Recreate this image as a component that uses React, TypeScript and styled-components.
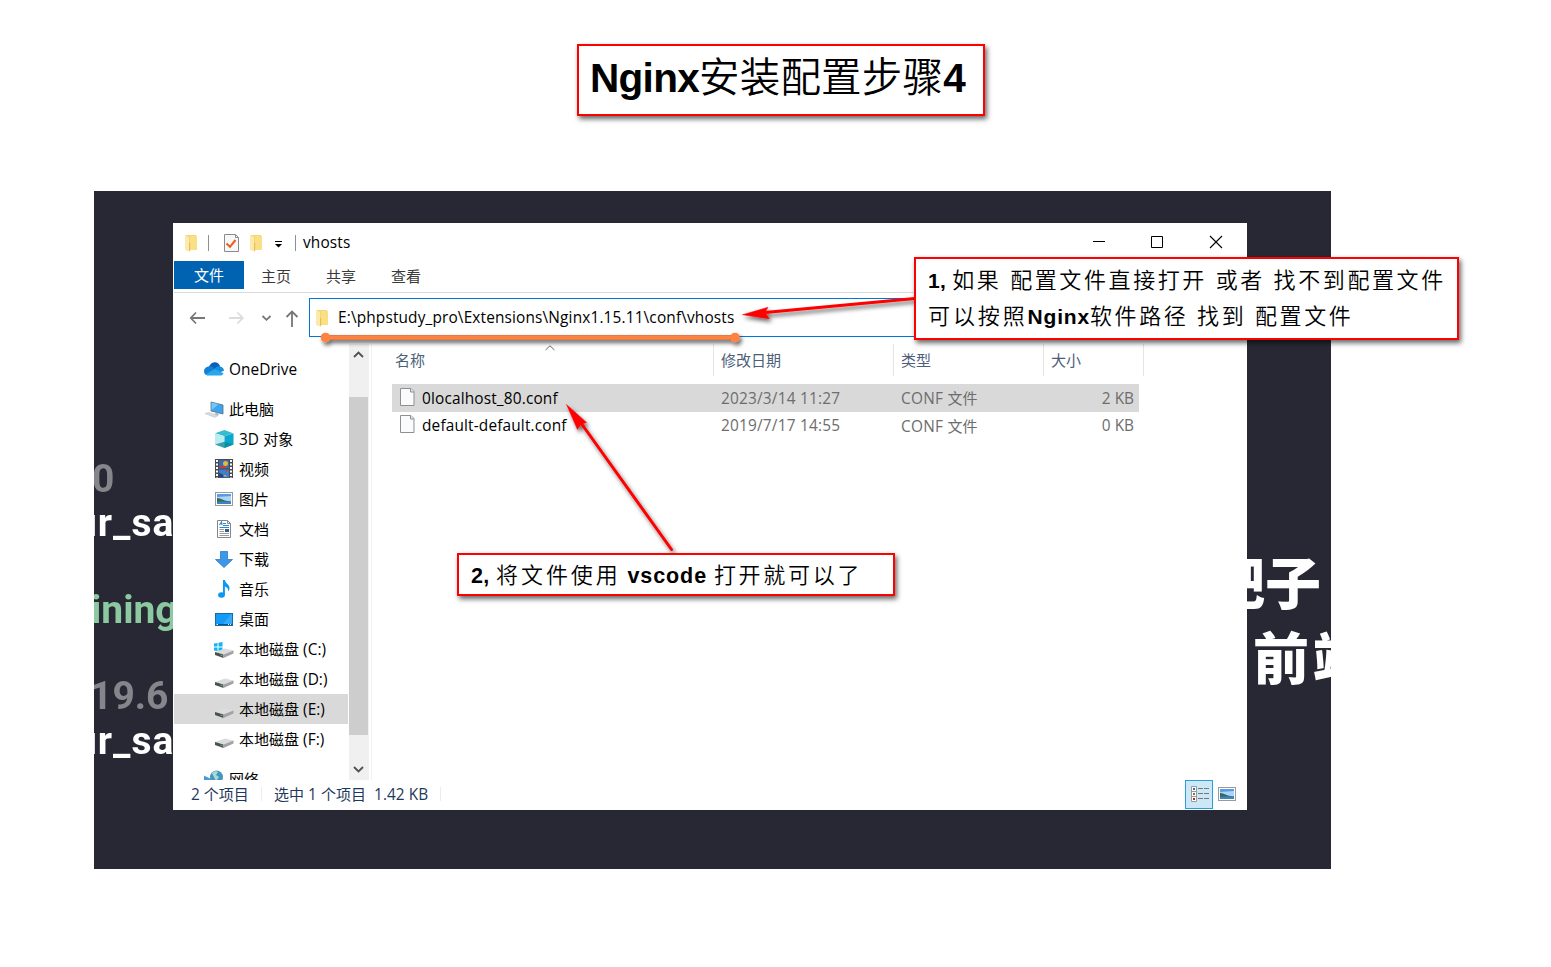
import React from 'react';
import styled, { createGlobalStyle } from 'styled-components';

const UI_FONT = '"Open Sans", "Noto Sans CJK SC", sans-serif';
const NOTE_FONT = '"Liberation Sans", "Noto Sans CJK SC", sans-serif';

const GlobalStyle = createGlobalStyle`
  *, *::before, *::after { box-sizing: border-box; }
  html, body { margin: 0; padding: 0; background: #fff; }
  body { width: 1551px; height: 967px; overflow: hidden; }
  svg { display: block; flex: none; }
`;

/* ---------- page ---------- */

const Page = styled.main`
  position: relative;
  width: 1551px;
  height: 967px;
  background: #fff;
  font-family: ${UI_FONT};
`;

const Header = styled.header`
  display: flex;
  height: 191px;
  padding: 44px 0 0 577px;
`;

const Backdrop = styled.section`
  display: flex;
  width: 1237px;
  height: 678px;
  margin-left: 94px;
  background: #272834;
  overflow: hidden;
`;

const LeftStrip = styled.div`
  flex: none;
  width: 79px;
  padding-top: 266px;
  overflow: hidden;
  font-family: Roboto, sans-serif;
  font-weight: 700;
  font-size: 39px;
  line-height: 44px;
`;

const CodeText = styled.div<{ $color: string; $shift: number; $gap?: number; $spacing?: number }>`
  margin: ${(p) => p.$gap ?? 0}px 0 0 ${(p) => p.$shift}px;
  color: ${(p) => p.$color};
  letter-spacing: ${(p) => p.$spacing ?? 0}px;
  white-space: nowrap;
  filter: blur(0.6px);
`;

const RightStrip = styled.div`
  flex: none;
  width: 84px;
  padding-top: 351px;
  overflow: hidden;
  color: #fff;
  font-family: "Noto Sans CJK SC", sans-serif;
  font-weight: 900;
  font-size: 56px;
  line-height: 75px;
`;

const BigText = styled.div<{ $shift: number; $spacing?: number }>`
  margin-left: ${(p) => p.$shift}px;
  letter-spacing: ${(p) => p.$spacing ?? 0}px;
  white-space: nowrap;
  filter: blur(0.5px);
`;

/* ---------- explorer window ---------- */

const Window = styled.div`
  flex: none;
  display: flex;
  flex-direction: column;
  width: 1074px;
  height: 587px;
  margin-top: 32px;
  background: #fff;
  color: #000;
  font-size: 15px;
`;

const TitleBar = styled.div`
  display: flex;
  align-items: center;
  height: 38px;
  padding: 1px 24px 0 12px;
`;

const Divider = styled.i<{ $left: number; $right: number }>`
  width: 1px;
  height: 16px;
  margin: 0 ${(p) => p.$right}px 0 ${(p) => p.$left}px;
  background: #8f8f8f;
`;

const QuickIcon = styled.span<{ $right?: number; $top?: number }>`
  margin: ${(p) => p.$top ?? 0}px ${(p) => p.$right ?? 0}px 0 0;
`;

const WindowButtons = styled.div`
  display: flex;
  align-items: center;
  gap: 45px;
  margin: 0 0 2px auto;
`;

const Ribbon = styled.div`
  display: flex;
  height: 32px;
  margin-left: 1px;
  border-bottom: 1px solid #dadbdc;
`;

const RibbonTab = styled.div<{ $active?: boolean }>`
  display: flex;
  align-items: center;
  justify-content: center;
  width: ${(p) => (p.$active ? 70 : 65)}px;
  height: 28px;
  padding: ${(p) => (p.$active ? '0 0 2px' : '0 1px 0 0')};
  background: ${(p) => (p.$active ? '#0063b1' : 'transparent')};
  color: ${(p) => (p.$active ? '#fff' : '#3a3a3a')};
`;

const AddressRow = styled.div`
  display: flex;
  height: 51px;
  padding: 5px 0 0 16px;
`;

const NavButtons = styled.div`
  display: flex;
  align-items: center;
  width: 120px;
  height: 41px;
`;

const AddressBox = styled.div`
  display: flex;
  align-items: center;
  gap: 9px;
  width: 760px;
  height: 39px;
  padding-left: 6px;
  border: 1px solid #0078d7;
  white-space: nowrap;
`;

const Body = styled.div`
  display: flex;
  flex: none;
  height: 436px;
`;

const Sidebar = styled.nav`
  width: 176px;
  height: 436px;
  padding: 10px 1px 0 1px;
  overflow: hidden;
`;

const NavItem = styled.div<{ $root?: boolean; $selected?: boolean; $gap?: number }>`
  display: flex;
  align-items: center;
  height: 30px;
  margin-top: ${(p) => p.$gap ?? 0}px;
  padding-left: ${(p) => (p.$root ? 30 : 41)}px;
  background: ${(p) => (p.$selected ? '#d9d9d9' : 'transparent')};
  white-space: nowrap;
`;

const NavIcon = styled.span<{ $width: number }>`
  flex: none;
  width: ${(p) => p.$width}px;
`;

const Scrollbar = styled.div`
  display: flex;
  flex-direction: column;
  align-items: flex-start;
  width: 20px;
  height: 436px;
  background: #f0f0f0;
`;

const ScrollCap = styled.div<{ $height: number }>`
  display: flex;
  align-items: center;
  justify-content: center;
  width: 19px;
  height: ${(p) => p.$height}px;
`;

const ScrollEnd = styled.div<{ $height: number }>`
  flex: none;
  height: ${(p) => p.$height}px;
`;

const ScrollThumb = styled.div`
  flex: none;
  width: 19px;
  height: 338px;
  background: #cdcdcd;
`;

const FilePane = styled.div`
  flex: 1;
  margin-left: 2px;
  border-left: 1px solid #f2f2f2;
  padding-left: 20px;
`;

const ColumnHeads = styled.div`
  display: flex;
  height: 32px;
  color: #4c607a;
`;

const ColumnHead = styled.div<{ $width: number; $pad: number }>`
  display: flex;
  justify-content: space-between;
  width: ${(p) => p.$width}px;
  padding-left: ${(p) => p.$pad}px;
  border-right: 1px solid #e5e5e5;
  line-height: 33px;
`;

const SortMark = styled.span`
  margin: 1px 158px 0 0;
`;

const FileRow = styled.div<{ $selected?: boolean }>`
  display: flex;
  align-items: center;
  width: 747px;
  height: ${(p) => (p.$selected ? 28 : 27)}px;
  padding: 0 5px 0 8px;
  background: ${(p) => (p.$selected ? '#d9d9d9' : 'transparent')};
`;

const FileList = styled.div`
  padding-top: 8px;
`;

const FileIcon = styled.span`
  margin-bottom: 3px;
`;

const Cell = styled.div<{ $width: number; $muted?: boolean; $right?: boolean }>`
  display: flex;
  align-items: center;
  gap: 7px;
  width: ${(p) => p.$width}px;
  justify-content: ${(p) => (p.$right ? 'flex-end' : 'flex-start')};
  color: ${(p) => (p.$muted ? '#6d6d6d' : '#000')};
  white-space: nowrap;
`;

const StatusBar = styled.footer`
  display: flex;
  align-items: center;
  height: 30px;
  padding: 0 11px 2px 18px;
  color: #1e395b;
  white-space: pre;
`;

const StatusItem = styled.span<{ $width: number }>`
  width: ${(p) => p.$width}px;
  height: 14px;
  line-height: 14px;
  margin-right: 12px;
  border-right: 1px solid #ececec;
`;

const ViewSwitch = styled.div`
  display: flex;
  align-items: center;
  gap: 5px;
  margin-left: auto;
`;

const DetailsButton = styled.span`
  display: flex;
  align-items: center;
  justify-content: center;
  width: 28px;
  height: 29px;
  padding: 1px 0 0 2px;
  background: #cce8f6;
  border: 1px solid #26a0da;
`;

const Latin = styled.span<{ $spacing: number }>`
  font-size: 15.4px;
  letter-spacing: ${(p) => p.$spacing}px;
`;

const LabelText = styled.span<{ $han: boolean }>`
  white-space: pre;
  padding-bottom: ${(p) => (p.$han ? 2 : 0)}px;
`;

/* Latin runs are set slightly larger than the Chinese ones beside them. */
function Label({ text, spacing = 0.15 }: { text: string; spacing?: number }) {
  const runs = text.split(/([\u4e00-\u9fff]+)/).filter(Boolean);
  return (
    <LabelText $han={/^[\u4e00-\u9fff]+$/.test(text)}>
      {runs.map((run, i) =>
        /[\u4e00-\u9fff]/.test(run) ? run : <Latin key={i} $spacing={spacing}>{run}</Latin>
      )}
    </LabelText>
  );
}

/* ---------- notes ---------- */

const NoteBox = styled.div<{ $width: number; $height: number }>`
  width: ${(p) => p.$width}px;
  height: ${(p) => p.$height}px;
  background: #fff;
  border: 2px solid #f00;
  box-shadow: 2px 3px 5px rgba(0, 0, 0, 0.6);
  color: #000;
  font-family: ${NOTE_FONT};
  white-space: pre;
`;

const TitleNote = styled(NoteBox)`
  padding-left: 11px;
  font-size: 40.5px;
  line-height: 65px;
`;

const PathNote = styled(NoteBox)`
  position: absolute;
  left: 914px;
  top: 257px;
  padding: 3px 0 0 12px;
  font-size: 22px;
  line-height: 37px;
`;

const NoteLine = styled.div`
  height: 36px;
`;

const OpenNote = styled(NoteBox)`
  position: absolute;
  left: 457px;
  top: 553px;
  padding-left: 12px;
  line-height: 42px;
`;

const Strong = styled.b<{ $size?: number; $spacing?: number }>`
  font-size: ${(p) => (p.$size ? `${p.$size}px` : 'inherit')};
  letter-spacing: ${(p) => p.$spacing ?? 0}px;
`;

const Han = styled.span<{ $size?: number; $spacing?: number }>`
  font-size: ${(p) => (p.$size ? `${p.$size}px` : 'inherit')};
  letter-spacing: ${(p) => p.$spacing ?? 0}px;
  font-weight: 350;
`;

const Overlay = styled.svg`
  position: absolute;
  left: 0;
  top: 0;
  pointer-events: none;
`;

/* ---------- icons ---------- */

const Folder = () => (
  <svg width="13" height="18" viewBox="0 0 13 18">
    <path d="M1 1h10v1.500h1V16H4L1 15z" fill="#f6d575" />
    <path d="M5 2h7v14H5z" fill="#fbdf86" />
    <path d="M0 1l4 2v14.500L0 16z" fill="#fbe9ae" />
    <path d="M4 9h1.200v7.500L4 17.500z" fill="#e9bf55" />
  </svg>
);

const CheckDoc = () => (
  <svg width="15" height="18" viewBox="0 0 15 18">
    <path d="M.5.5h11l3 3v14H.5z" fill="#f6f7f9" stroke="#8b8b8b" />
    <path d="M11.500.5v3h3" fill="none" stroke="#8b8b8b" />
    <path d="M2.500 9.500l3.500 3.300L11.500 6" fill="none" stroke="#f05a1a" strokeWidth="2" />
  </svg>
);

const Caret = () => (
  <svg width="7" height="7" viewBox="0 0 7 7">
    <path d="M0 .5h7" stroke="#000" />
    <path d="M0 3h7L3.500 6.500z" fill="#000" />
  </svg>
);

const OneDrive = () => (
  <svg width="20" height="14" viewBox="0 0 20 14">
    <path d="M5 4.500C6.500 1.500 9 0 11.500.3c2.500.3 4 2 4.700 4.200L9 9z" fill="#0a5fb8" />
    <path d="M4.500 4.500c2.500-.6 4 .3 6 2L4 13.500C1.500 13.500 0 11.500 0 9.300 0 6.800 2 4.700 4.500 4.500z" fill="#1080d8" />
    <path d="M10 7.500c2-3 4-3.400 6-3 2.500.3 4 2 4 4.300l-5 2z" fill="#1490df" />
    <path d="M4 13.600l-2.500-1L10.500 7l9 4.200c-.6 1.500-1.800 2.400-3.500 2.400z" fill="#28a8ea" />
  </svg>
);

const Computer = () => (
  <svg width="21" height="20" viewBox="0 -2 21 20">
    <path d="M7 1l12 3v9L7 10z" fill="#3aa5ee" stroke="#5b6b7b" strokeWidth=".8" />
    <path d="M7.500 1.600l7 1.700-7 6z" fill="#74c6fa" />
    <path d="M12 12l3 .8-1 2-4-1z" fill="#aab4bc" />
    <path d="M1 12.500l4-1 9 3-3 2z" fill="#d9dde1" stroke="#b4bbc2" strokeWidth=".5" />
  </svg>
);

const Cube = () => (
  <svg width="19" height="18" viewBox="0 0 19 18">
    <path d="M9.500 0L18 3.300 9.500 6.200 0 3.300z" fill="#35bccd" />
    <path d="M0 3.300l9.500 2.900V18L0 14.500z" fill="#b9edf0" />
    <path d="M18.500 3.300L9.500 6.200V18l9-3.500z" fill="#0ba5cf" />
    <path d="M0 14.500l9.500-2.800 9 2.800L9.500 18z" fill="#0a8793" opacity=".75" />
  </svg>
);

const Film = () => (
  <svg width="18" height="20" viewBox="0 0 18 20">
    <rect width="18" height="19" fill="#4a4a4a" />
    <path d="M2 1v18M16 1v18" stroke="#fff" strokeWidth="2" strokeDasharray="2 1.500" />
    <rect x="4" y="1" width="10" height="8.500" fill="#356bb8" />
    <rect x="4" y="10.500" width="10" height="8" fill="#3f7fd2" />
    <circle cx="10.500" cy="4.500" r="2.500" fill="#e6b92e" />
    <path d="M5 7h6v2H5zM10 11h3l-1.500 2z" fill="#cf3b3b" />
    <path d="M4 14l3 1 3 3.500H4z" fill="#22477f" />
    <path d="M8 17.500q2-3 4 0" fill="#e6b92e" />
  </svg>
);

const Picture = () => (
  <svg width="18" height="14" viewBox="0 0 18 14">
    <rect x=".5" y=".5" width="17" height="13" fill="#fff" stroke="#9a9a9a" />
    <rect x="2" y="2" width="14" height="10" fill="#a9d6f7" />
    <path d="M2 2h14v2L2 5z" fill="#5b9ae6" />
    <path d="M2 6c3-.5 6 3 14 3.500V11H2z" fill="#38695a" />
    <path d="M2 10c5-1 9 0 14-.5V12H2z" fill="#3f84bd" />
  </svg>
);

const TextDoc = () => (
  <svg width="18" height="18" viewBox="0 0 18 18">
    <path d="M2.500.5h10l3 3v14h-13z" fill="#fff" stroke="#868686" />
    <path d="M12.500.5v3h3" fill="none" stroke="#868686" />
    <path d="M4.500 5L6.500 2l.5 3" fill="none" stroke="#2f86c9" strokeWidth="1.200" />
    <path d="M8 3.500h3M8 5.500h6M4.500 7.500h9.500" stroke="#2f86c9" />
    <path d="M4.500 9.500H9M4.500 11.500H9M4.500 13.500h9.500M4.500 15.500h9.500" stroke="#9a9a9a" />
    <rect x="10" y="9" width="4" height="3" fill="#2c5e95" />
  </svg>
);

const Download = () => (
  <svg width="18" height="17" viewBox="0 0 18 17">
    <path d="M5.500.5h7v8h5L9 16.500.5 8.500h5z" fill="#3c97e8" stroke="#2b7bc4" strokeWidth=".8" />
  </svg>
);

const Music = () => (
  <svg width="18" height="18" viewBox="0 0 18 18">
    <ellipse cx="6.500" cy="15" rx="3.400" ry="2.700" fill="#0b98f2" />
    <path d="M8 0h2c.3 3.500 4.500 4.500 4.500 8 0 1.500-.5 2.500-1.300 3.500.3-3-1-4.300-3.300-5V15H8z" fill="#0b98f2" />
  </svg>
);

const Desktop = () => (
  <svg width="18" height="13" viewBox="0 0 18 13">
    <rect x=".5" y=".5" width="17" height="12" fill="#139af8" stroke="#0f6fae" />
    <path d="M8 11L16 1h1v10z" fill="#35a9fa" />
    <path d="M1 11.500h16" stroke="#0b4f80" />
    <path d="M1.500 11.500h1.500M13 11.500h1M15 11.500h1" stroke="#fff" />
  </svg>
);

const Drive = ({ system }: { system?: boolean }) => (
  <svg width="20" height="20" viewBox="0 -2 20 20" overflow="visible">
    {system && (
      <path
        d="M-1 2.500L2.500 2v3.500H-1zM3.500 1.800L7.500 1v4.500h-4zM-1 6.500h3.500V10L-1 9.500zM3.500 6.500h4v4.300l-4-.7z"
        fill="#12b4f0"
      />
    )}
    <path d="M0 11L10 7.500l8.500 2-10 4z" fill="#dcdcde" />
    <path d="M0 11l8.500 2.500v3.500L0 14z" fill="#4b4f4e" />
    <path d="M8.500 13.500l10-4v3l-10 4.500z" fill="#a2a3a6" />
    <path d="M5.500 14l2 .7" stroke="#58c46a" />
  </svg>
);

const Network = () => (
  <svg width="20" height="18" viewBox="0 0 20 18">
    <circle cx="12.500" cy="7" r="6.500" fill="#4597b8" />
    <path d="M8 3c2-2 5-2.500 6-1l-2 3 3 2-3 4z" fill="#a9d9df" />
    <path d="M0 6l9 4v6l-9-3z" fill="#3b9de6" stroke="#6b8ba5" strokeWidth=".6" />
  </svg>
);

const File = () => (
  <svg width="15" height="18" viewBox="0 0 15 18">
    <path d="M.5.5h10.500l3 3v14H.5z" fill="#fafbfc" stroke="#8f8f8f" />
    <path d="M10.500.5v3.500h3.500" fill="#e8e8e8" stroke="#8f8f8f" />
  </svg>
);

const Details = () => (
  <svg width="18" height="17" viewBox="0 0 18 17">
    <path d="M.5.5h5v15h-5zM.5 5.500h5M.5 10.500h5" fill="#fff" stroke="#999" />
    <path d="M2 3h2" stroke="#2b6fa5" strokeWidth="2" />
    <path d="M2 8h2" stroke="#7a7a2a" strokeWidth="2" />
    <path d="M2 13h2" stroke="#b02a2a" strokeWidth="2" />
    <path d="M7 2.500h5M13 2.500h5M7 7.500h5M13 7.500h5M7 12.500h5M13 12.500h5" stroke="#777" />
  </svg>
);

const NavArrows = () => (
  <svg width="120" height="41" viewBox="0 0 120 41" fill="none" strokeWidth="1.800">
    <path d="M16 20H2M7 14.500L1.800 20 7 25.500" stroke="#777" />
    <path d="M40 20H54M48.500 14.500l5.200 5.500-5.200 5.500" stroke="#dcdcdc" />
    <path d="M73.500 18l4 3.800 4-3.800" stroke="#777" />
    <path d="M103 29V13.500M97.500 19l5.500-5.500 5.500 5.500" stroke="#777" />
  </svg>
);

const Chevron = ({ down }: { down?: boolean }) => (
  <svg width="11" height="8" viewBox="0 0 11 8">
    <path d={down ? 'M1 2l4.500 4.500L10 2' : 'M1 7L5.500 2.500 10 7'} fill="none" stroke="#505050" strokeWidth="1.800" />
  </svg>
);

const Minimize = () => (
  <svg width="12" height="14" viewBox="0 0 12 14"><path d="M0 6.500h12" stroke="#000" /></svg>
);
const Maximize = () => (
  <svg width="14" height="14" viewBox="0 0 14 14"><path d="M1.500 1.500h11v11h-11z" stroke="#000" fill="none" /></svg>
);
const Close = () => (
  <svg width="14" height="14" viewBox="0 0 14 14"><path d="M1 1l12 12M13 1L1 13" stroke="#000" strokeWidth="1.100" /></svg>
);

/* ---------- data ---------- */

const places = [
  { text: 'OneDrive', icon: <OneDrive />, root: true },
  { text: '此电脑', icon: <Computer />, root: true, gap: 10 },
  { text: '3D 对象', icon: <Cube /> },
  { text: '视频', icon: <Film /> },
  { text: '图片', icon: <Picture /> },
  { text: '文档', icon: <TextDoc /> },
  { text: '下载', icon: <Download /> },
  { text: '音乐', icon: <Music /> },
  { text: '桌面', icon: <Desktop /> },
  { text: '本地磁盘 (C:)', icon: <Drive system /> },
  { text: '本地磁盘 (D:)', icon: <Drive /> },
  { text: '本地磁盘 (E:)', icon: <Drive />, selected: true },
  { text: '本地磁盘 (F:)', icon: <Drive /> },
  { text: '网络', icon: <Network />, root: true, gap: 10 },
];

const files = [
  { name: '0localhost_80.conf', date: '2023/3/14 11:27', type: 'CONF 文件', size: '2 KB', selected: true },
  { name: 'default-default.conf', date: '2019/7/17 14:55', type: 'CONF 文件', size: '0 KB' },
];

export default function App() {
  return (
    <Page>
      <GlobalStyle />
      <Header>
        <TitleNote $width={408} $height={72}>
          <Strong $spacing={-0.7}>Nginx</Strong><Han $spacing={0.2}>安装配置步骤</Han><Strong>4</Strong>
        </TitleNote>
      </Header>

      <Backdrop>
        <LeftStrip>
          <CodeText $color="#85858c" $shift={-2}>0</CodeText>
          <CodeText $color="#fff" $shift={-19} $spacing={1}>ur_sa</CodeText>
          <CodeText $color="#8cc8a0" $shift={-3} $gap={43}>ining</CodeText>
          <CodeText $color="#85858c" $shift={-4} $gap={42}>19.6</CodeText>
          <CodeText $color="#fff" $shift={-19} $gap={1} $spacing={1}>ur_sa</CodeText>
        </LeftStrip>

        <Window>
          <TitleBar>
            <QuickIcon><Folder /></QuickIcon>
            <Divider $left={10} $right={15} />
            <QuickIcon $right={11}><CheckDoc /></QuickIcon>
            <QuickIcon $right={12}><Folder /></QuickIcon>
            <QuickIcon $top={3}><Caret /></QuickIcon>
            <Divider $left={13} $right={7} />
            <Label text="vhosts" />
            <WindowButtons>
              <Minimize /><Maximize /><Close />
            </WindowButtons>
          </TitleBar>

          <Ribbon>
            <RibbonTab $active>文件</RibbonTab>
            <RibbonTab>主页</RibbonTab>
            <RibbonTab>共享</RibbonTab>
            <RibbonTab>查看</RibbonTab>
          </Ribbon>

          <AddressRow>
            <NavButtons><NavArrows /></NavButtons>
            <AddressBox>
              <Folder />
              <Label text="E:\phpstudy_pro\Extensions\Nginx1.15.11\conf\vhosts" />
            </AddressBox>
          </AddressRow>

          <Body>
            <Sidebar>
              {places.map((p) => (
                <NavItem key={p.text} $root={p.root} $selected={p.selected} $gap={p.gap}>
                  <NavIcon $width={p.root ? 25 : 24}>{p.icon}</NavIcon>
                  <Label text={p.text} spacing={0.05} />
                </NavItem>
              ))}
            </Sidebar>
            <Scrollbar>
              <ScrollEnd $height={53}><ScrollCap $height={20}><Chevron /></ScrollCap></ScrollEnd>
              <ScrollThumb />
              <ScrollEnd $height={45}><ScrollCap $height={68}><Chevron down /></ScrollCap></ScrollEnd>
            </Scrollbar>
            <FilePane>
              <ColumnHeads>
                <ColumnHead $width={322} $pad={3}>
                  名称
                  <SortMark>
                    <svg width="10" height="6" viewBox="0 0 10 6">
                      <path d="M.5 5L5 .8 9.500 5" fill="none" stroke="#6a6a6a" />
                    </svg>
                  </SortMark>
                </ColumnHead>
                <ColumnHead $width={180} $pad={7}>修改日期</ColumnHead>
                <ColumnHead $width={150} $pad={7}>类型</ColumnHead>
                <ColumnHead $width={100} $pad={7}>大小</ColumnHead>
              </ColumnHeads>
              <FileList>
                {files.map((f) => (
                  <FileRow key={f.name} $selected={f.selected}>
                    <Cell $width={321}><FileIcon><File /></FileIcon><Label text={f.name} spacing={0.16} /></Cell>
                    <Cell $width={180} $muted><Label text={f.date} spacing={0.2} /></Cell>
                    <Cell $width={133} $muted><Label text={f.type} spacing={0.25} /></Cell>
                    <Cell $width={100} $muted $right><Label text={f.size} spacing={0} /></Cell>
                  </FileRow>
                ))}
              </FileList>
            </FilePane>
          </Body>

          <StatusBar>
            <StatusItem $width={71}><Label text="2 个项目" spacing={0} /></StatusItem>
            <StatusItem $width={167}><Label text="选中 1 个项目  1.42 KB" spacing={0.05} /></StatusItem>
            <ViewSwitch>
              <DetailsButton><Details /></DetailsButton>
              <Picture />
            </ViewSwitch>
          </StatusBar>
        </Window>

        <RightStrip>
          <BigText $shift={-38}>吧子</BigText>
          <BigText $shift={6} $spacing={4}>前端</BigText>
        </RightStrip>
      </Backdrop>

      <Overlay width="1551" height="967" viewBox="0 0 1551 967">
        <defs>
          <filter id="shade" filterUnits="userSpaceOnUse" x="300" y="280" width="640" height="290">
            <feDropShadow dx="2" dy="3" stdDeviation="2" floodColor="#000" floodOpacity="0.6" />
          </filter>
        </defs>
        <g filter="url(#shade)">
          <path d="M326 337.500H735" stroke="#e07a48" strokeWidth="5" />
          <path d="M326 337.500H735" stroke="#ff8340" strokeWidth="3" />
          <circle cx="325.500" cy="337.500" r="4.800" fill="#ff8340" />
          <circle cx="735" cy="337.500" r="4.800" fill="#ff8340" />
        </g>
        <g filter="url(#shade)" fill="#f00" stroke="#f00">
          <path d="M765 312.500L915 298.500" strokeWidth="3" />
          <path d="M742.500 314.700L768 307.300 765 312.500 769.300 318.700z" strokeWidth=".5" />
          <path d="M581 423L671.500 549.500" strokeWidth="3" strokeLinecap="round" />
          <path d="M566.500 404.500L586.500 422.500 581 424 577.500 429.500z" strokeWidth=".5" />
        </g>
      </Overlay>

      <PathNote $width={545} $height={83}>
        <NoteLine>
          <Strong $size={21} $spacing={0.3}>1, </Strong>
          <Han $spacing={2.6}>如果 配置文件直接打开 或者 找不到配置文件</Han>
        </NoteLine>
        <NoteLine>
          <Han $spacing={2.9}>可以按照</Han>
          <Strong $size={21} $spacing={0.8}>Nginx</Strong>
          <Han $spacing={2.6}>软件路径 找到 配置文件</Han>
        </NoteLine>
      </PathNote>

      <OpenNote $width={438} $height={43}>
        <Strong $size={21.5} $spacing={0.4}>2, </Strong>
        <Han $size={22} $spacing={2.9}>将文件使用</Han>
        <Strong $size={21.5} $spacing={0.9}> vscode </Strong>
        <Han $size={22} $spacing={2.7}>打开就可以了</Han>
      </OpenNote>
    </Page>
  );
}
